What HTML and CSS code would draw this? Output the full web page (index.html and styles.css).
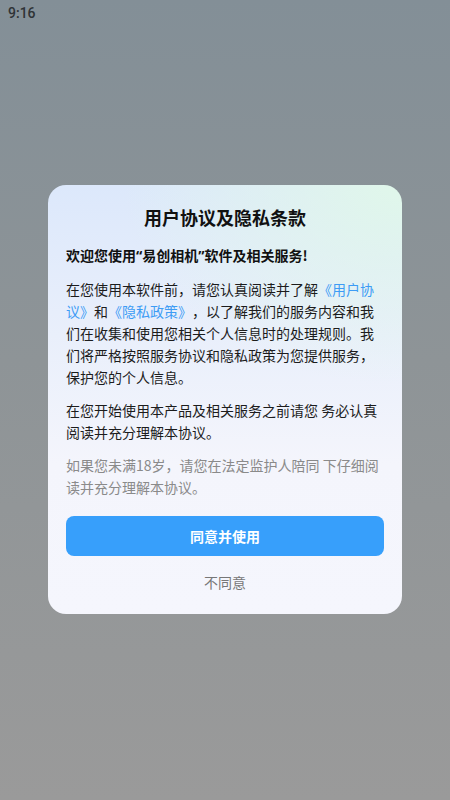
FILE: index.html
```html
<!DOCTYPE html>
<html lang="zh-CN">
<head>
<meta charset="utf-8">
<link rel="stylesheet" href="styles.css">
</head>
<body>
<div class="screen">
  <div class="status">9:16</div>
  <div class="center">
    <div class="dialog">
      <h1 class="title">用户协议及隐私条款</h1>
      <p class="welcome">欢迎您使用<span class="q">“</span>易创相机<span class="q">”</span>软件及相关服务!</p>
      <p class="para"><span>在您使用本软件前，请您认真阅读并了解</span><span class="link">《用户协</span><span class="link">议》</span><span>和</span><span class="link">《隐私政策》</span><span>，以了解我们的服务内容和我</span><span>们在收集和使用您相关个人信息时的处理规则。我们将严格按照服务协议和隐私政策为您提供服务，保护您的个人信息。</span></p>
      <p class="para">在您开始使用本产品及相关服务之前请您 务必认真阅读并充分理解本协议。</p>
      <p class="para muted">如果您未满18岁，请您在法定监护人陪同 下仔细阅读并充分理解本协议。</p>
      <button class="agree">同意并使用</button>
      <div class="disagree">不同意</div>
    </div>
  </div>
</div>
</body>
</html>
```
FILE: styles.css
```css
* { box-sizing: border-box; }
html, body { margin: 0; padding: 0; }
body {
  width: 450px;
  height: 800px;
  overflow: hidden;
  font-family: "Noto Sans CJK SC", "Noto Sans", sans-serif;
  text-spacing-trim: space-all;
}
.screen {
  width: 450px;
  height: 800px;
  background: linear-gradient(180deg, #838f97 0%, #8e9497 45%, #9a9a9a 100%);
  display: flex;
  flex-direction: column;
}
.status {
  height: 26px;
  padding: 4px 0 0 8px;
  font-family: Roboto, "Noto Sans", sans-serif;
  font-size: 14px;
  font-weight: 500;
  color: #2f3336;
  line-height: 18px;
}
.center {
  flex: 1;
  display: flex;
  justify-content: center;
  padding-top: 159px;
}
.dialog {
  width: 354px;
  height: 429px;
  border-radius: 18px;
  padding: 19px 18px 0 18px;
  background:
    radial-gradient(ellipse 280px 200px at 100% 0%, rgba(224, 247, 234, 1) 0%, rgba(224, 247, 234, 0) 100%),
    linear-gradient(180deg, #dce8fb 0%, #e9effb 35%, #f4f5fc 65%, #f5f6fd 100%);
  display: flex;
  flex-direction: column;
}
.title {
  margin: 0;
  text-align: center;
  font-size: 18px;
  font-weight: 700;
  line-height: 26px;
  color: #111;
}
.welcome {
  margin: 14px 0 0 0;
  font-size: 14px;
  font-weight: 700;
  line-height: 22px;
  color: #111;
}
.q {
  font-family: "Noto Sans", Roboto, sans-serif;
}
.para {
  margin: 11px 0 0 0;
  font-size: 14px;
  line-height: 22px;
  color: #1c1c1c;
}
.link { color: #3d9cf5; }
.muted { color: #8a8a8a; }
.agree {
  margin-top: 18px;
  height: 40px;
  width: 100%;
  border: none;
  border-radius: 8px;
  background: #379ffb;
  color: #fff;
  font-family: "Noto Sans CJK SC", "Noto Sans", sans-serif;
  font-size: 14px;
  font-weight: 700;
  padding: 0;
}
.disagree {
  margin-top: 15px;
  text-align: center;
  font-size: 14px;
  line-height: 22px;
  color: #777;
}
```
